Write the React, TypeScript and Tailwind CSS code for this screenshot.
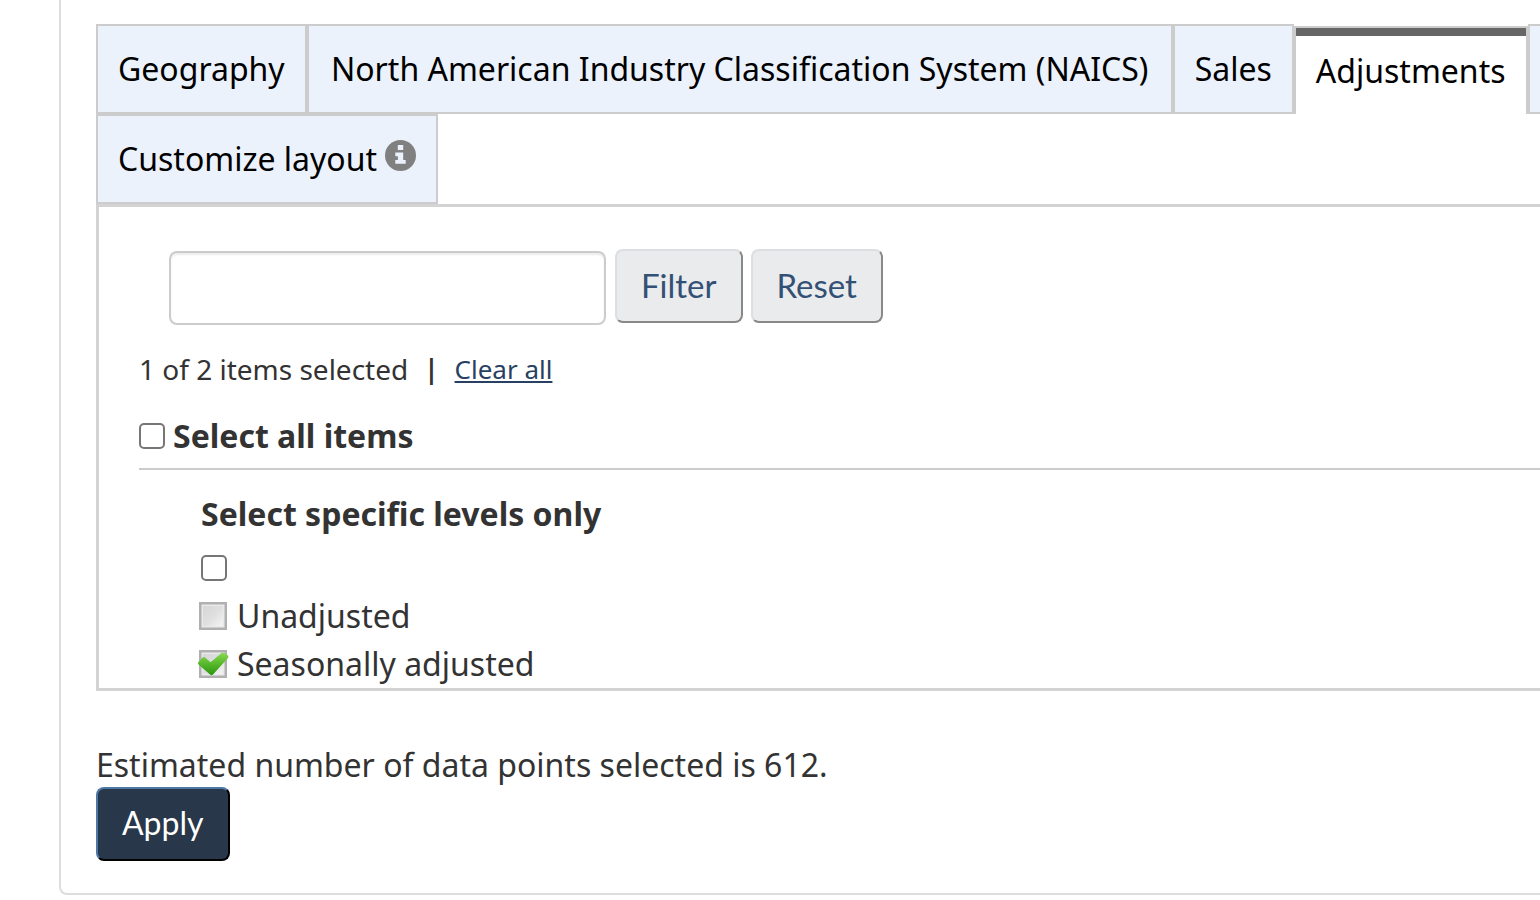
import { useState } from "react";

const tabs = [
  { name: "Geography", width: "" },
  { name: "North American Industry Classification System (NAICS)", width: "min-w-[866px]" },
  { name: "Sales", width: "" },
];

const tabClass =
  "h-[90px] shrink-0 border-2 border-[#ccc] bg-[#ebf2fc] px-5 text-black whitespace-nowrap";

const buttonClass =
  "h-[74px] rounded-lg border-2 px-6 pb-0.5 font-['Lato',sans-serif] leading-[48px]";

const greyButtonClass =
  "border-t-[#dcdee1] border-r-[#888] border-b-[#888] border-l-[#dcdee1] bg-[#eaebed] text-[33px] text-[#335075]";

const checkboxClass =
  "size-[26px] shrink-0 appearance-none rounded-[5px] border-2 border-[#767676] bg-white checked:bg-[#0075ff]";

function InfoIcon() {
  return (
    <svg viewBox="0 0 31 31" className="size-[31px]" aria-hidden="true">
      <circle cx="15.5" cy="15.5" r="15.5" fill="#808080" />
      <path
        fill="#ebf2fc"
        d="M12.800 5h5.400v5h-5.400zM10.300 12.500h7.900v7.500h2.500v3.700H10.300V20h2.600v-3.800h-2.600z"
      />
    </svg>
  );
}

function TreeMark({ checked }: { checked: boolean }) {
  return (
    <svg viewBox="0 0 32 32" className="pointer-events-none size-8" aria-hidden="true">
      <defs>
        <linearGradient id="boxFill" x1="0" y1="0" x2="1" y2="1">
          <stop offset="0" stopColor="#d6d6d6" />
          <stop offset="0.5" stopColor="#dfdfdf" />
          <stop offset="1" stopColor="#f4f4f4" />
        </linearGradient>
        <linearGradient id="tickFill" x1="0" y1="0" x2="0" y2="1">
          <stop offset="0" stopColor="#8bd853" />
          <stop offset="0.5" stopColor="#56b82a" />
          <stop offset="1" stopColor="#2c9410" />
        </linearGradient>
      </defs>
      <rect x="2" y="2" width="28" height="28" fill="#b0b0b0" />
      <rect x="4.500" y="4.500" width="23" height="23" fill="#e9e9e9" />
      <rect x="6" y="6" width="20" height="20" fill="url(#boxFill)" />
      {checked && (
        <path
          d="M1.200 14.200 L5.500 9.500 Q6.800 8.500 8 9.500 L13.500 14.300 L24 5.500 Q25.500 4.300 27 5.100 L31 7.500 Q32 8.500 31 10 L16 26.500 Q14.500 28 13 26.500 L1.500 16.500 Q.4 15.300 1.200 14.200Z"
          fill="url(#tickFill)"
        />
      )}
    </svg>
  );
}

function TreeItem({ label, initial }: { label: string; initial: boolean }) {
  const [checked, setChecked] = useState(initial);
  return (
    <label className="flex h-12 items-center gap-2">
      <input
        type="checkbox"
        className="sr-only"
        checked={checked}
        onChange={(e) => setChecked(e.target.checked)}
      />
      <TreeMark checked={checked} />
      {label}
    </label>
  );
}

export default function App() {
  return (
    <div className="h-screen overflow-hidden bg-white pl-[59px] font-['Noto_Sans',sans-serif] text-[32px] leading-[48px] text-[#333]">
      <main className="rounded-bl-lg border-b-2 border-l-2 border-[#ddd] pt-6 pb-8 pl-[35px]">
        <div role="tablist">
          <div className="flex overflow-hidden">
            {tabs.map(({ name, width }) => (
              <button key={name} role="tab" aria-selected={false} className={`${tabClass} ${width}`}>
                {name}
              </button>
            ))}
            <button
              role="tab"
              aria-selected={true}
              className="mt-0.5 h-[88px] shrink-0 border-x-2 border-t-2 border-[#ccc] bg-white text-black"
            >
              <span className="flex h-full items-center border-t-8 border-[#666] px-5 pb-2">
                Adjustments
              </span>
            </button>
            <button
              role="tab"
              aria-selected={false}
              aria-label="Reference period"
              className="h-[90px] grow border-y-2 border-l-2 border-[#ccc] bg-[#ebf2fc]"
            />
          </div>
          <button role="tab" aria-selected={false} className={`${tabClass} flex items-center gap-2`}>
            Customize layout
            <span className="pb-2">
              <InfoIcon />
            </span>
          </button>
        </div>

        <section className="border-y-[3px] border-l-[3px] border-[#d3d3d3] pt-[42px] pl-10">
          <form className="flex items-start pl-[30px]" onSubmit={(e) => e.preventDefault()}>
            <input
              type="text"
              aria-label="Filter items"
              className="mt-0.5 mr-[9px] h-[74px] w-[437px] rounded-lg border-2 border-[#ccc] px-6 shadow-[inset_0_2px_2px_rgba(0,0,0,0.075)]"
            />
            <button type="submit" className={`${buttonClass} ${greyButtonClass} mr-2`}>
              Filter
            </button>
            <button type="reset" className={`${buttonClass} ${greyButtonClass}`}>
              Reset
            </button>
          </form>

          <p className="mt-5 flex items-center text-[28px]">
            1 of 2 items selected
            <span className="mx-4 text-[26px] font-bold">|</span>
            <a href="#clear" className="text-[26px] text-[#284162] underline">
              Clear all
            </a>
          </p>

          <label className="mt-[19px] flex items-center gap-2 border-b-2 border-[#ccc] pb-2 font-bold">
            <input type="checkbox" className={checkboxClass} />
            Select all items
          </label>

          <div className="pt-5 pl-[62px]">
            <h3 className="font-bold">Select specific levels only</h3>
            <div className="flex h-[54px] items-center pt-1.5">
              <input type="checkbox" aria-label="Select level" className={checkboxClass} />
            </div>
            <div className="-ml-1">
              <TreeItem label="Unadjusted" initial={false} />
              <TreeItem label="Seasonally adjusted" initial={true} />
            </div>
          </div>
        </section>

        <p className="mt-[51px] leading-[45px]">Estimated number of data points selected is 612.</p>
        <button
          className={`${buttonClass} border-t-[#4d77a5] border-r-black border-b-black border-l-[#4d77a5] bg-[#283749] text-[32px] text-white`}
        >
          Apply
        </button>
      </main>
    </div>
  );
}
